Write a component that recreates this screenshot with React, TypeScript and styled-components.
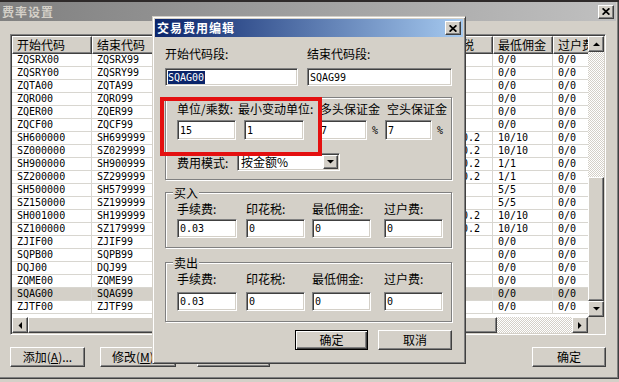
import React from "react";
import styled, { createGlobalStyle, css } from "styled-components";

const FACE = "#d4d0c8";
const SHADOW = "#808080";
const DARK = "#404040";
const GRID = "#d8d6d0";
const CJK = `"Noto Sans CJK SC", "Noto Sans", sans-serif`;
const MONO = `"DejaVu Sans Mono", "Liberation Mono", "Noto Sans CJK SC", monospace`;

const GlobalStyle = createGlobalStyle`
  html, body { margin: 0; padding: 0; }
  body { background: ${FACE}; font-family: ${CJK}; font-size: 12px; color: #000; }
  * { box-sizing: border-box; }
`;

const raised = css`
  background: ${FACE};
  border: 1px solid;
  border-color: #fff ${DARK} ${DARK} #fff;
  box-shadow: inset -1px -1px ${SHADOW};
`;

const sunken = css`
  border: 1px solid;
  border-color: ${SHADOW} #fff #fff ${SHADOW};
  box-shadow: inset 1px 1px ${DARK}, inset -1px -1px ${FACE};
`;

const hatch = css`
  background: repeating-conic-gradient(#fff 0 25%, ${FACE} 0 50%) 0 0 / 2px 2px;
`;

// ---------- shell ----------
const Screen = styled.div`
  position: relative;
  width: 619px;
  height: 382px;
  overflow: hidden;
  background: ${FACE};
  display: flex;
  flex-direction: column;
`;

const TopEdge = styled.div`
  flex: none;
  height: 2px;
  background: #2e2a2a;
`;

const BgWindow = styled.div`
  flex: none;
  height: 377px;
  display: flex;
  flex-direction: column;
  padding: 0 2px 2px 0;
  border-right: 1px solid ${DARK};
  border-bottom: 1px solid ${DARK};
  box-shadow: inset -1px -1px ${SHADOW};
`;

const TitleBar = styled.div<{ $active?: boolean; $h: number }>`
  flex: none;
  height: ${(p) => p.$h}px;
  display: flex;
  align-items: center;
  padding: 0 2px;
  background: ${(p) =>
    p.$active
      ? "linear-gradient(90deg, #0a246a, #a6caf0)"
      : "linear-gradient(90deg, #808080, #c0c0c0)"};
  color: ${(p) => (p.$active ? "#fff" : FACE)};
`;

const TitleText = styled.span`
  flex: 1;
  font-weight: bold;
  font-size: 12px;
  line-height: 14px;
  letter-spacing: 1px;
  white-space: nowrap;
`;

const CloseButton = styled.div`
  ${raised};
  flex: none;
  width: 16px;
  height: 14px;
  display: flex;
  align-items: center;
  justify-content: center;
`;

const BgBody = styled.div`
  flex: 1;
  display: flex;
  flex-direction: column;
  padding: 13px 10px 0 10px;
`;

// ---------- list view ----------
const ListBox = styled.div`
  ${sunken};
  flex: none;
  height: 301px;
  padding: 1px;
  display: grid;
  grid-template-columns: 1fr 16px;
  grid-template-rows: 1fr 16px;
`;

const TableArea = styled.div`
  overflow: hidden;
  background: #fff;
`;

const HeaderRow = styled.div`
  display: flex;
  height: 18px;
`;

const HeaderCell = styled.div<{ $w: number }>`
  ${raised};
  flex: none;
  width: ${(p) => p.$w}px;
  padding-left: 4px;
  line-height: 15px;
  white-space: nowrap;
  overflow: hidden;
`;

const Row = styled.div<{ $selected?: boolean }>`
  display: flex;
  height: 13px;
  border-bottom: 1px solid ${GRID};
  background: ${(p) => (p.$selected ? FACE : "#fff")};
`;

const Cell = styled.div<{ $w: number }>`
  flex: none;
  width: ${(p) => p.$w}px;
  padding-left: 5px;
  border-right: 1px solid ${GRID};
  font-family: ${MONO};
  font-size: 10px;
  line-height: 12px;
  white-space: nowrap;
  overflow: hidden;
`;

const VScroll = styled.div`
  display: flex;
  flex-direction: column;
`;

const HScroll = styled.div`
  display: flex;
`;

const ArrowButton = styled.div`
  ${raised};
  flex: none;
  width: 16px;
  height: 16px;
  display: flex;
  align-items: center;
  justify-content: center;
`;

const VTrack = styled.div`
  ${hatch};
  flex: 1;
  display: flex;
  flex-direction: column;
`;

const HTrack = styled.div`
  ${hatch};
  flex: 1;
  display: flex;
`;

const Thumb = styled.div<{ $offset: number; $size: number; $vertical?: boolean }>`
  ${raised};
  flex: none;
  ${(p) =>
    p.$vertical
      ? `margin-top: ${p.$offset}px; height: ${p.$size}px;`
      : `margin-left: ${p.$offset}px; width: ${p.$size}px;`}
`;

const Corner = styled.div`
  background: ${FACE};
`;

const BgButtons = styled.div`
  display: flex;
  margin-top: 12px;
  height: 20px;
`;

const PushButton = styled.div<{ $w: number; $ml?: number; $default?: boolean }>`
  flex: none;
  width: ${(p) => p.$w}px;
  height: 20px;
  margin-left: ${(p) => (p.$ml === undefined ? 0 : p.$ml)}px;
  background: ${FACE};
  display: flex;
  align-items: center;
  justify-content: center;
  line-height: 14px;
  white-space: nowrap;
  border: 1px solid;
  ${(p) =>
    p.$default
      ? css`
          border-color: #000;
          box-shadow: inset 1px 1px #fff, inset -1px -1px ${DARK}, inset -2px -2px ${SHADOW};
        `
      : css`
          border-color: #fff ${DARK} ${DARK} #fff;
          box-shadow: inset -1px -1px ${SHADOW};
        `}
  &.right {
    margin-left: auto;
  }
`;

// ---------- dialog ----------
const Dialog = styled.div`
  position: absolute;
  left: 152px;
  top: 16px;
  width: 314px;
  height: 348px;
  display: flex;
  flex-direction: column;
  padding: 2px;
  background: ${FACE};
  border: 1px solid;
  border-color: ${FACE} ${DARK} ${DARK} ${FACE};
  box-shadow: inset 1px 1px #fff, inset -1px -1px ${SHADOW};
`;

const Annotation = styled.div`
  position: absolute;
  left: 7px;
  top: 80px;
  width: 162px;
  height: 59px;
  border: 4px solid #e41010;
  pointer-events: none;
`;

const DialogBody = styled.div`
  flex: 1;
  display: flex;
  flex-direction: column;
  padding: 10px 11px 11px 10px;
`;

const CodeFields = styled.div`
  display: grid;
  grid-template-columns: 133px 145px;
  column-gap: 9px;
  row-gap: 8px;
`;

const Label = styled.div<{ $indent?: number }>`
  line-height: 13px;
  white-space: nowrap;
  padding-left: ${(p) => p.$indent || 0}px;
`;

const TextBox = styled.div<{ $w: number; $h: number }>`
  ${sunken};
  flex: none;
  width: ${(p) => p.$w}px;
  height: ${(p) => p.$h}px;
  background: #fff;
  padding: 0 2px;
  display: flex;
  align-items: center;
  font-family: ${MONO};
  font-size: 10px;
  white-space: nowrap;
  overflow: hidden;
`;

const Highlight = styled.span`
  background: #0a246a;
  color: #fff;
  line-height: 13px;
  padding: 0 1px 0 0;
`;

const Group = styled.div<{ $h: number; $mt: number; $pt: number }>`
  position: relative;
  flex: none;
  height: ${(p) => p.$h}px;
  margin-top: ${(p) => p.$mt}px;
  padding: ${(p) => p.$pt}px 0 0 11px;
  border: 1px solid ${SHADOW};
  box-shadow: inset 1px 1px #fff, 1px 1px #fff;
`;

const Legend = styled.span`
  position: absolute;
  left: 7px;
  top: -7px;
  padding: 0 1px;
  line-height: 13px;
  background: ${FACE};
`;

const SpecGrid = styled.div`
  display: grid;
  grid-template-columns: 61px 80px 67px 1fr;
  row-gap: 5px;
`;

const FeeGrid = styled.div<{ $gap: number }>`
  display: grid;
  grid-template-columns: 69px 66px 72px 1fr;
  row-gap: ${(p) => p.$gap}px;
`;

const FieldCell = styled.div<{ $indent?: number }>`
  display: flex;
  align-items: center;
  padding-left: ${(p) => p.$indent || 0}px;
`;

const Percent = styled.span`
  margin-left: 5px;
  font-family: ${MONO};
  font-size: 10px;
`;

const ModeRow = styled.div`
  display: flex;
  align-items: center;
  margin-top: 13px;
`;

const ModeLabel = styled(Label)`
  width: 60px;
`;

const Select = styled.div`
  ${sunken};
  width: 103px;
  height: 18px;
  padding: 1px;
  display: flex;
  background: #fff;
`;

const SelectValue = styled.span`
  flex: 1;
  padding-left: 2px;
  line-height: 14px;
  white-space: nowrap;
`;

const DropButton = styled.div`
  ${raised};
  width: 15px;
  display: flex;
  align-items: center;
  justify-content: center;
`;

const DialogButtons = styled.div`
  display: flex;
  justify-content: flex-end;
  gap: 10px;
  margin-top: 8px;
`;

// ---------- glyphs ----------
const CloseGlyph = () => (
  <svg width="8" height="7" viewBox="0 0 8 7">
    <path d="M0.6 0.3 L7.4 6.7 M7.4 0.3 L0.6 6.7" stroke="#000" strokeWidth="1.7" />
  </svg>
);

const Tri = ({ dir }: { dir: "up" | "down" | "left" | "right" }) => {
  const vertical = dir === "up" || dir === "down";
  const d = {
    up: "M0 4 H7 L3.5 0.5 Z",
    down: "M0 0 H7 L3.5 3.5 Z",
    left: "M4 0 V7 L0.5 3.5 Z",
    right: "M0 0 V7 L3.5 3.5 Z",
  }[dir];
  return (
    <svg width={vertical ? 7 : 4} height={vertical ? 4 : 7} viewBox={vertical ? "0 0 7 4" : "0 0 4 7"}>
      <path d={d} fill="#000" />
    </svg>
  );
};

// ---------- data ----------
// the middle columns sit behind the dialog, so they are left blank
const columns = [
  { key: "start", title: "开始代码", width: 80 },
  { key: "end", title: "结束代码", width: 80 },
  { key: "unit", title: "", width: 70 },
  { key: "tick", title: "", width: 80 },
  { key: "fee", title: "", width: 111 },
  { key: "stamp", title: "印花税", width: 60 },
  { key: "min", title: "最低佣金", width: 60 },
  { key: "transfer", title: "过户费", width: 60 },
] as const;

type Rate = Partial<Record<(typeof columns)[number]["key"], string>>;

const fut = (start: string, end: string): Rate => ({ start, end, min: "0/0", transfer: "0/0" });
const stk = (start: string, end: string, stamp: string, min: string): Rate => ({
  start, end, stamp, min, transfer: "0/0",
});

const rates: Rate[] = [
  fut("ZQSRX00", "ZQSRX99"),
  fut("ZQSRY00", "ZQSRY99"),
  fut("ZQTA00", "ZQTA99"),
  fut("ZQRO00", "ZQRO99"),
  fut("ZQER00", "ZQER99"),
  fut("ZQCF00", "ZQCF99"),
  stk("SH600000", "SH699999", "0.1/0.2", "10/10"),
  stk("SZ000000", "SZ029999", "0.1/0.2", "10/10"),
  stk("SH900000", "SH900999", "0.1/0.2", "1/1"),
  stk("SZ200000", "SZ299999", "0.1/0.2", "1/1"),
  stk("SH500000", "SH579999", "", "5/5"),
  stk("SZ150000", "SZ199999", "", "5/5"),
  stk("SH001000", "SH199999", "0.1/0.2", "10/10"),
  stk("SZ100000", "SZ179999", "0.1/0.2", "10/10"),
  fut("ZJIF00", "ZJIF99"),
  fut("SQPB00", "SQPB99"),
  fut("DQJ00", "DQJ99"),
  fut("ZQME00", "ZQME99"),
  fut("SQAG00", "SQAG99"),
  fut("ZJTF00", "ZJTF99"),
];

const feeLabels = ["手续费:", "印花税:", "最低佣金:", "过户费:"];

function FeeGroup({ title, values, mt, h, gap }: { title: string; values: string[]; mt: number; h: number; gap: number }) {
  return (
    <Group $h={h} $mt={mt} $pt={9}>
      <Legend>{title}</Legend>
      <FeeGrid $gap={gap}>
        {feeLabels.map((l) => (
          <Label key={l}>{l}</Label>
        ))}
        {values.map((v, i) => (
          <FieldCell key={i}>
            <TextBox $w={i === 0 ? 60 : 59} $h={19}>{v}</TextBox>
          </FieldCell>
        ))}
      </FeeGrid>
    </Group>
  );
}

export default function App() {
  return (
    <>
      <GlobalStyle />
      <Screen>
        <TopEdge />
        <BgWindow>
          <TitleBar $h={19}>
            <TitleText>费率设置</TitleText>
            <CloseButton>
              <CloseGlyph />
            </CloseButton>
          </TitleBar>
          <BgBody>
            <ListBox>
              <TableArea>
                <HeaderRow>
                  {columns.map((c) => (
                    <HeaderCell key={c.key} $w={c.width}>
                      {c.title}
                    </HeaderCell>
                  ))}
                </HeaderRow>
                {rates.map((r) => (
                  <Row key={r.start} $selected={r.start === "SQAG00"}>
                    {columns.map((c) => (
                      <Cell key={c.key} $w={c.width}>
                        {r[c.key] || ""}
                      </Cell>
                    ))}
                  </Row>
                ))}
              </TableArea>
              <VScroll>
                <ArrowButton>
                  <Tri dir="up" />
                </ArrowButton>
                <VTrack>
                  <Thumb $vertical $offset={125} $size={124} />
                </VTrack>
                <ArrowButton>
                  <Tri dir="down" />
                </ArrowButton>
              </VScroll>
              <HScroll>
                <ArrowButton>
                  <Tri dir="left" />
                </ArrowButton>
                <HTrack>
                  <Thumb $offset={0} $size={469} />
                </HTrack>
                <ArrowButton>
                  <Tri dir="right" />
                </ArrowButton>
              </HScroll>
              <Corner />
            </ListBox>
            <BgButtons>
              <PushButton $w={75}>
                添加(<u>A</u>)...
              </PushButton>
              <PushButton $w={76} $ml={15}>
                修改(<u>M</u>)...
              </PushButton>
              <PushButton $w={73} $ml={21} />
              <PushButton $w={74} className="right">
                确定
              </PushButton>
            </BgButtons>
          </BgBody>
        </BgWindow>

        <Dialog>
          <TitleBar $active $h={18}>
            <TitleText>交易费用编辑</TitleText>
            <CloseButton>
              <CloseGlyph />
            </CloseButton>
          </TitleBar>
          <DialogBody>
            <CodeFields>
              <Label>开始代码段:</Label>
              <Label>结束代码段:</Label>
              <TextBox $w={133} $h={18}>
                <Highlight>SQAG00</Highlight>
              </TextBox>
              <TextBox $w={145} $h={18}>
                SQAG99
              </TextBox>
            </CodeFields>

            <Group $h={83} $mt={11} $pt={4}>
              <SpecGrid>
                <Label>单位/乘数:</Label>
                <Label>最小变动单位:</Label>
                <Label $indent={2}>多头保证金</Label>
                <Label $indent={2}>空头保证金</Label>
                <FieldCell>
                  <TextBox $w={59} $h={20}>15</TextBox>
                </FieldCell>
                <FieldCell $indent={6}>
                  <TextBox $w={60} $h={20}>1</TextBox>
                </FieldCell>
                <FieldCell>
                  <TextBox $w={49} $h={20}>7</TextBox>
                  <Percent>%</Percent>
                </FieldCell>
                <FieldCell>
                  <TextBox $w={47} $h={20}>7</TextBox>
                  <Percent>%</Percent>
                </FieldCell>
              </SpecGrid>
              <ModeRow>
                <ModeLabel>费用模式:</ModeLabel>
                <Select>
                  <SelectValue>按金额%</SelectValue>
                  <DropButton>
                    <Tri dir="down" />
                  </DropButton>
                </Select>
              </ModeRow>
            </Group>

            <FeeGroup title="买入" values={["0.03", "0", "0", "0"]} mt={12} h={56} gap={4} />
            <FeeGroup title="卖出" values={["0.03", "0", "0", "0"]} mt={14} h={60} gap={7} />

            <DialogButtons>
              <PushButton $w={73} $default>
                确定
              </PushButton>
              <PushButton $w={74}>取消</PushButton>
            </DialogButtons>
          </DialogBody>
          <Annotation />
        </Dialog>
      </Screen>
    </>
  );
}
